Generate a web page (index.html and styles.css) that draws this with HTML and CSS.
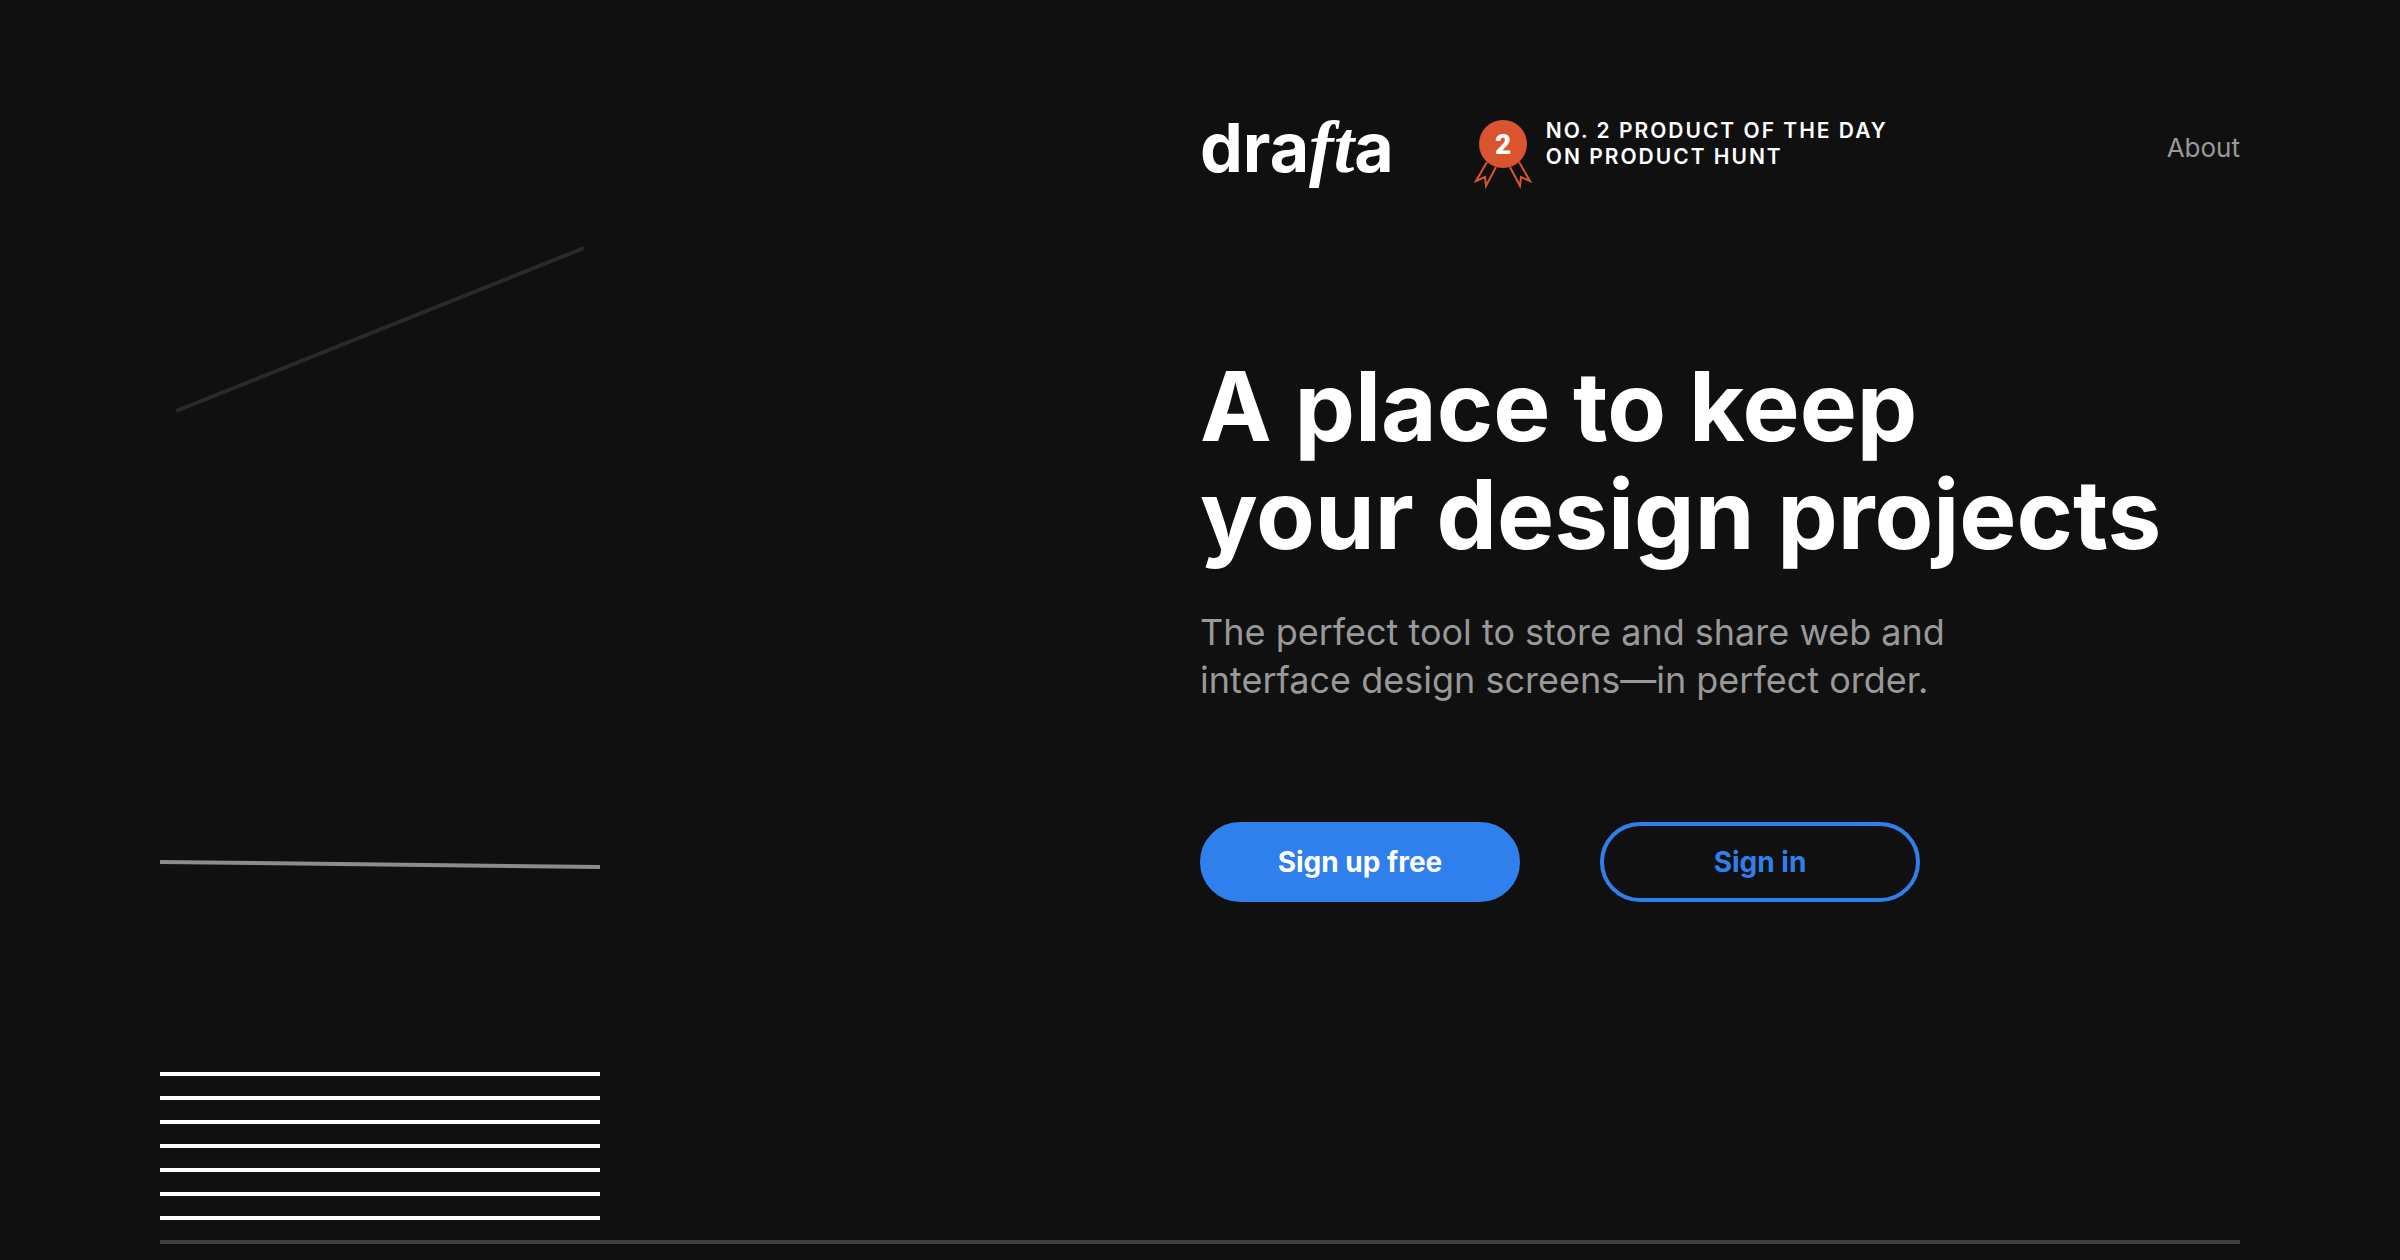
FILE: index.html
```html
<!DOCTYPE html>
<html lang="en">
<head>
    <meta charset="UTF-8">
    <meta name="viewport" content="width=device-width, initial-scale=1.0">
    <title>Drafta</title>
    <link rel="stylesheet" href="styles.css">
</head>
<body>
    <main class="hero">
        <svg class="screens" viewBox="0 0 440 1000" fill="none" stroke-width="4" aria-hidden="true">
            <path stroke="#2a2a2b" d="M16 171L424 8"/>
            <path stroke="#8c8c8c" d="M0 622L440 627"/>
            <path stroke="#fff" d="M0 834H440M0 858H440M0 882H440M0 906H440M0 930H440M0 954H440M0 978H440"/>
        </svg>

        <div class="content">
            <header class="header">
                <div class="logo">dra<span class="logo-serif">ft</span>a</div>
                <div class="award">
                    <svg class="medal" width="58" height="72" viewBox="0 -2 58 72" aria-hidden="true">
                        <g fill="none" stroke="#da552f" stroke-width="2">
                            <path d="M13 42L2 61L11 57L12 66L22 47"/>
                            <path d="M45 42L56 61L47 57L46 66L36 47"/>
                        </g>
                        <circle cx="29" cy="24" r="24" fill="#da552f"/>
                        <text class="medal-number" x="29" y="34">2</text>
                    </svg>
                    <p class="award-text">No. 2 product of the day<br>on Product Hunt</p>
                </div>
                <a class="about" href="#">About</a>
            </header>

            <h1>A place to keep<br>your design projects</h1>
            <p class="lead">The perfect tool to store and share web and<br>interface design screens—in perfect order.</p>

            <div class="actions">
                <button class="button button-primary" type="button">Sign up free</button>
                <button class="button button-outline" type="button">Sign in</button>
            </div>
        </div>
    </main>
</body>
</html>
```

FILE: styles.css
```css
* {
    box-sizing: border-box;
}
body {
    margin: 0;
    background: #101010;
    color: #fff;
    font-family: Inter, "Liberation Sans", sans-serif;
}
h1, p {
    margin: 0;
}
.hero {
    display: grid;
    grid-template-columns: 1fr 1fr;
    min-height: calc(100vh - 16px);
    margin: 0 160px;
    border-bottom: 4px solid #404040;
}
.screens {
    width: 440px;
    align-self: end;
}
.content {
    padding-top: 118px;
}
.header {
    display: flex;
    align-items: flex-start;
    height: 72px;
}
.logo {
    font-size: 68px;
    font-weight: 700;
    line-height: 58px;
}
.logo-serif {
    font-family: "Liberation Serif", serif;
    font-size: 74px;
    font-style: italic;
    font-weight: 700;
    line-height: 1px;
}
.award {
    display: flex;
    gap: 14px;
    margin-left: 80px;
}
.medal-number {
    fill: #fff;
    font-family: Roboto, sans-serif;
    font-size: 28px;
    font-weight: 900;
    text-anchor: middle;
}
.award-text {
    font-size: 21px;
    font-weight: 600;
    line-height: 26px;
    letter-spacing: 2px;
    text-transform: uppercase;
    white-space: nowrap;
}
.about {
    margin-left: auto;
    color: #999;
    font-size: 26px;
    font-weight: 400;
    line-height: 60px;
    text-decoration: none;
}
h1 {
    margin-top: 162px;
    font-size: 96px;
    font-weight: 700;
    line-height: 108px;
}
.lead {
    margin-top: 40px;
    color: #999;
    font-size: 36px;
    font-weight: 400;
    line-height: 48px;
}
.actions {
    display: flex;
    gap: 80px;
    margin-top: 118px;
}
.button {
    width: 320px;
    height: 80px;
    padding: 0;
    border: 4px solid #2f80ed;
    border-radius: 40px;
    font-family: inherit;
    font-size: 28px;
    font-weight: 700;
    cursor: pointer;
}
.button-primary {
    background: #2f80ed;
    color: #fff;
}
.button-outline {
    background: none;
    color: #2f80ed;
}
```
